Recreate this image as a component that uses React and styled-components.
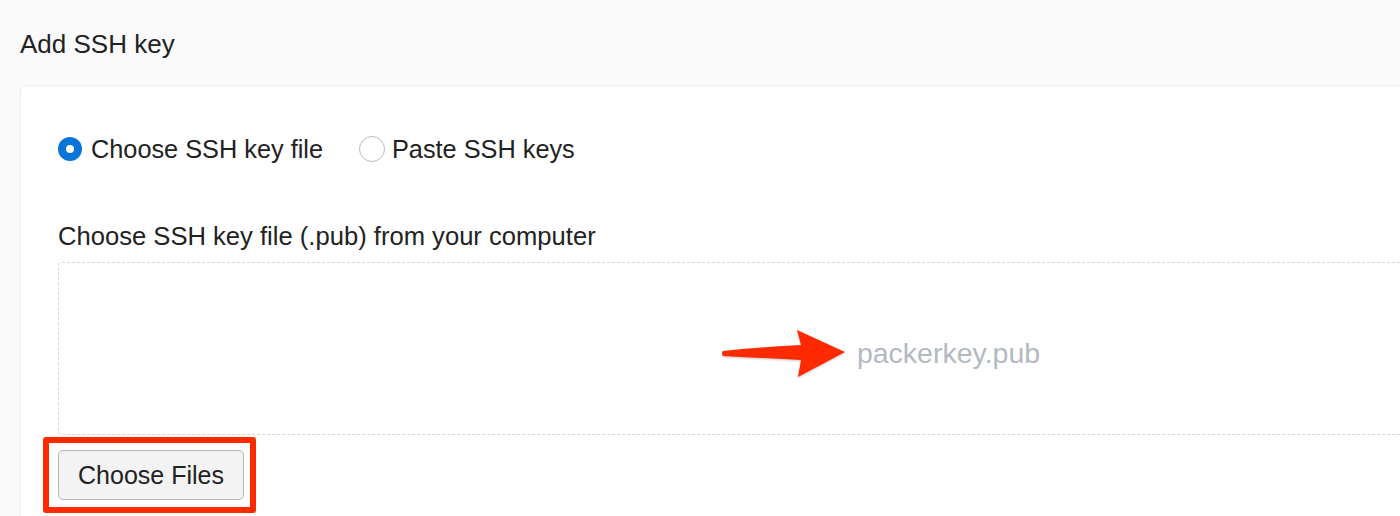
import React from "react";
import styled, { createGlobalStyle } from "styled-components";

const Global = createGlobalStyle`
  html, body { margin: 0; padding: 0; background: #fafafa; }
  body { font-family: "Liberation Sans", Arial, Helvetica, sans-serif; color: #222; }
  * { box-sizing: border-box; }
`;

const Page = styled.div`
  width: 1400px;
  height: 516px;
  overflow: hidden;
  padding: 29px 0 0 20px;
`;

const Title = styled.h2`
  margin: 0 0 26px 0;
  font-size: 26px;
  line-height: 30px;
  font-weight: 400;
  color: #222;
`;

const Card = styled.div`
  width: 1857px;
  background: #fff;
  border: 1px solid #efefef;
  border-radius: 5px;
  padding: 48px 37px 40px 37px;
`;

const RadioRow = styled.div`
  display: flex;
  align-items: center;
  gap: 36px;
  height: 30px;
`;

const RadioLabel = styled.label`
  display: flex;
  align-items: center;
  gap: ${(p) => (p.$tight ? "7px" : "9px")};
  font-size: 25.3px;
  line-height: 30px;
  color: #222;
  cursor: pointer;
`;

const RadioCircle = styled.span`
  width: ${(p) => (p.$checked ? "24px" : "26px")};
  height: ${(p) => (p.$checked ? "24px" : "26px")};
  border-radius: 50%;
  flex: none;
  background: ${(p) => (p.$checked ? "#0a75d8" : "#fff")};
  border: ${(p) => (p.$checked ? "none" : "1px solid #b9bcc0")};
  display: flex;
  align-items: center;
  justify-content: center;
  &::after {
    content: "";
    display: ${(p) => (p.$checked ? "block" : "none")};
    width: 8px;
    height: 8px;
    border-radius: 50%;
    background: #fff;
  }
`;

const FieldLabel = styled.div`
  margin-top: 57px;
  font-size: 25.6px;
  line-height: 30px;
  color: #222;
`;

const DropZone = styled.div`
  margin-top: 11px;
  height: 173px;
  border: 1px dashed #d6d6d6;
  border-radius: 4px;
  display: flex;
  align-items: center;
  justify-content: center;
`;

const FileName = styled.span`
  position: relative;
  font-size: 28.5px;
  line-height: 32px;
  color: #b3b9c1;
  margin-top: 8px;
`;

const Arrow = styled.svg`
  position: absolute;
  right: calc(100% + 10px);
  top: 50%;
  transform: translateY(-50%);
  overflow: visible;
  filter: drop-shadow(0 1px 1px rgba(0, 0, 0, 0.25));
`;

const ButtonRow = styled.div`
  margin-top: 15px;
  display: flex;
`;

const Highlight = styled.span`
  position: relative;
  display: inline-flex;
  &::after {
    content: "";
    position: absolute;
    left: -15px;
    top: -13px;
    right: -12px;
    bottom: -13px;
    border: 6px solid #ff2a00;
    border-radius: 3px;
    pointer-events: none;
  }
`;

const FileButton = styled.button`
  width: 186px;
  height: 50px;
  border: 1px solid #b4b6ba;
  border-radius: 5px;
  background: #f3f3f3;
  font-family: inherit;
  font-size: 25px;
  color: #222;
  padding: 0;
  cursor: pointer;
`;

export default function App() {
  return (
    <>
      <Global />
      <Page>
        <Title>Add SSH key</Title>
        <Card>
          <RadioRow>
            <RadioLabel>
              <RadioCircle $checked />
              Choose SSH key file
            </RadioLabel>
            <RadioLabel $tight>
              <RadioCircle />
              Paste SSH keys
            </RadioLabel>
          </RadioRow>
          <FieldLabel>Choose SSH key file (.pub) from your computer</FieldLabel>
          <DropZone>
            <FileName>
              <Arrow width="126" height="52" viewBox="0 0 126 52">
                <path
                  d="M2 24 Q40 20 80 18 L76 3 L124 25 L77 50 L80 33 Q40 31 2 29 Q0 26.5 2 24 Z"
                  fill="#ff2a00"
                />
              </Arrow>
              packerkey.pub
            </FileName>
          </DropZone>
          <ButtonRow>
            <Highlight>
              <FileButton>Choose Files</FileButton>
            </Highlight>
          </ButtonRow>
        </Card>
      </Page>
    </>
  );
}
